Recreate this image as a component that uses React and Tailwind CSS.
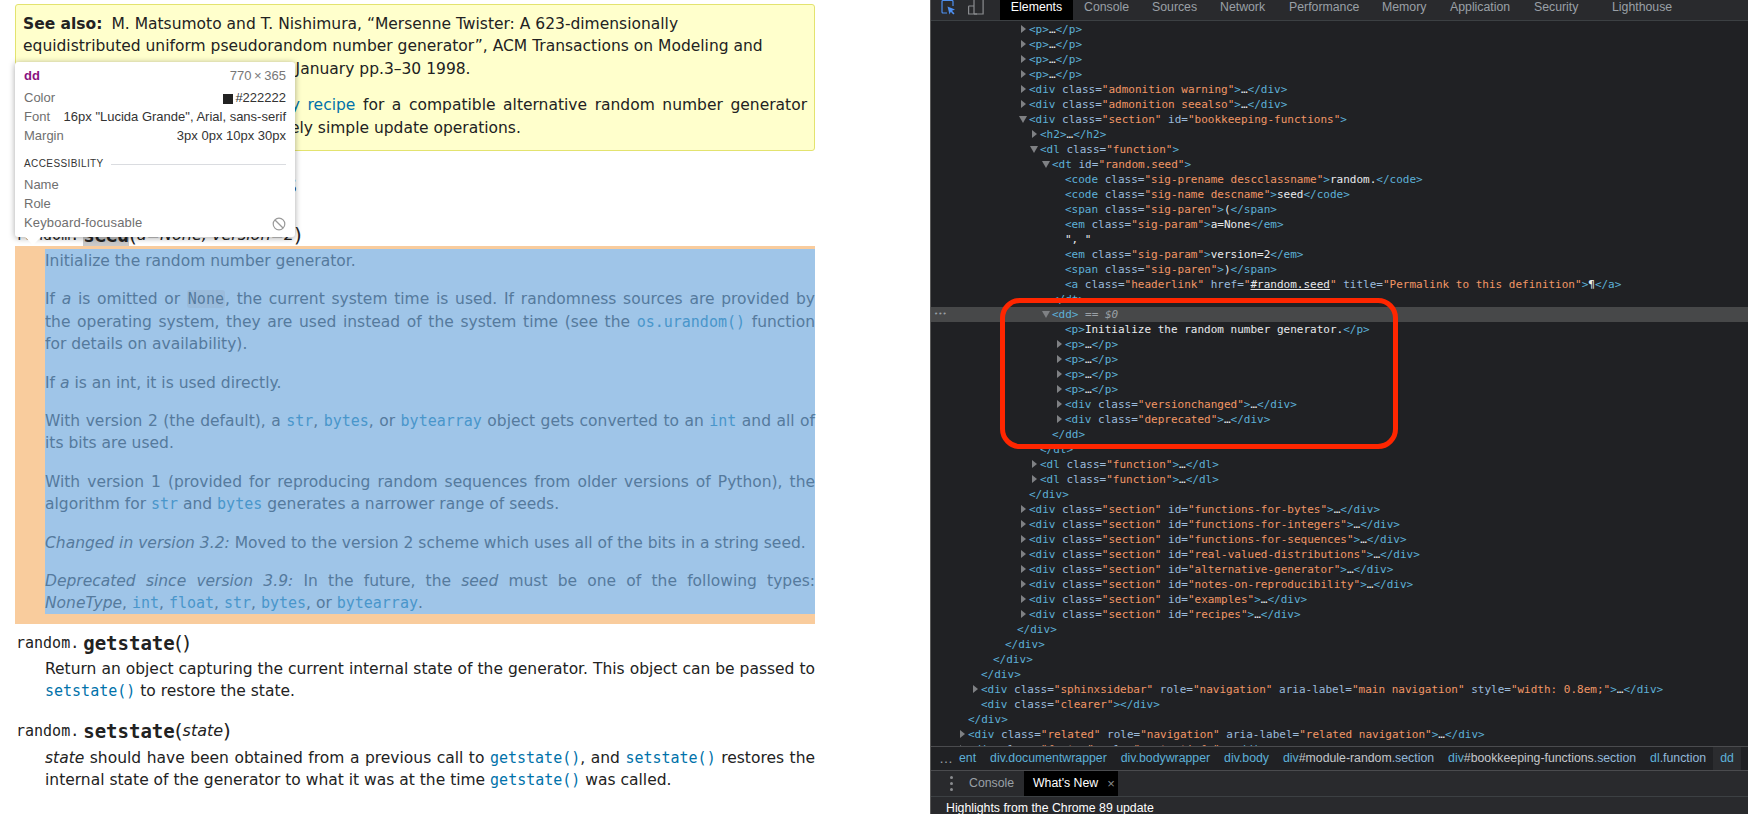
import React from "react";

const MONO = "font-['DejaVu_Sans_Mono','Liberation_Mono',monospace]";
const BODY = "font-['DejaVu_Sans','Open_Sans',sans-serif]";
const UI = "font-['Liberation_Sans',Arial,sans-serif]";

const J = ({ children }) => <div className="[text-align-last:justify] whitespace-nowrap">{children}</div>;
const L = ({ children }) => <div className="whitespace-nowrap">{children}</div>;

const Code = ({ children, light }) => (
  <code className={`${MONO} text-[15px] leading-none ${light ? "text-[#4996cb]" : "text-[#0072aa]"}`}>{children}</code>
);
const Link = ({ children }) => <Code light>{children}</Code>;

function Sig({ name, params, seed }) {
  return (
    <div className="flex h-[30px] items-end whitespace-nowrap pl-px leading-[22px] text-[#222]">
      <span className={`${MONO} text-[15px]`}>random.</span>
      <span className={`${MONO} ml-[4px] text-[19px] font-bold ${seed ? "bg-[#c9c9c9]" : ""}`}>{name}</span>
      <span className="text-[20px]">(</span>
      {params && <em className="text-[16px]">{params}</em>}
      <span className="text-[20px]">)</span>
    </div>
  );
}

const INDENT = [
  "pl-[37px]", "pl-[50px]", "pl-[62px]", "pl-[74px]", "pl-[86px]",
  "pl-[98px]", "pl-[109px]", "pl-[121px]", "pl-[134px]",
];

function tokens(s) {
  const parts = s.match(/"[^"]*"|\s[\w-]+=|<[^>\s]*|>|…|[^<>"…]+/g) || [];
  return parts.map((p, i) => {
    if (p === '"#random.seed"')
      return <span key={i} className="text-[#f29766]">"<span className="text-[#e8eaed] underline">#random.seed</span>"</span>;
    if (p[0] === '"') return <span key={i} className="text-[#f29766]">{p}</span>;
    if (/^\s[\w-]+=$/.test(p)) return <span key={i} className="text-[#9bbbdc]">{p}</span>;
    if (p[0] === "<" || p === ">") return <span key={i} className="text-[#5db0d7]">{p}</span>;
    return <span key={i} className="text-[#e8eaed]">{p}</span>;
  });
}

function Tri({ open }) {
  return open ? (
    <span className="absolute -ml-[10px] mt-[4px] h-0 w-0 border-x-[4px] border-t-[7px] border-x-transparent border-t-[#7f8184]" />
  ) : (
    <span className="absolute -ml-[8px] mt-[3px] h-0 w-0 border-y-[4px] border-l-[5px] border-y-transparent border-l-[#7f8184]" />
  );
}

const rows = [
  [5, "c", "<p>…</p>"], [5, "c", "<p>…</p>"], [5, "c", "<p>…</p>"], [5, "c", "<p>…</p>"],
  [5, "c", '<div class="admonition warning">…</div>'],
  [5, "c", '<div class="admonition seealso">…</div>'],
  [5, "o", '<div class="section" id="bookkeeping-functions">'],
  [6, "c", "<h2>…</h2>"],
  [6, "o", '<dl class="function">'],
  [7, "o", '<dt id="random.seed">'],
  [8, "", '<code class="sig-prename descclassname">random.</code>'],
  [8, "", '<code class="sig-name descname">seed</code>'],
  [8, "", '<span class="sig-paren">(</span>'],
  [8, "", '<em class="sig-param">a=None</em>'],
  [8, "raw", '", "'],
  [8, "", '<em class="sig-param">version=2</em>'],
  [8, "", '<span class="sig-paren">)</span>'],
  [8, "", '<a class="headerlink" href="#random.seed" title="Permalink to this definition">¶</a>'],
  [7, "", "</dt>"],
  [7, "sel", ""],
  [8, "", "<p>Initialize the random number generator.</p>"],
  [8, "c", "<p>…</p>"], [8, "c", "<p>…</p>"], [8, "c", "<p>…</p>"], [8, "c", "<p>…</p>"],
  [8, "c", '<div class="versionchanged">…</div>'],
  [8, "c", '<div class="deprecated">…</div>'],
  [7, "", "</dd>"],
  [6, "", "</dl>"],
  [6, "c", '<dl class="function">…</dl>'],
  [6, "c", '<dl class="function">…</dl>'],
  [5, "", "</div>"],
  [5, "c", '<div class="section" id="functions-for-bytes">…</div>'],
  [5, "c", '<div class="section" id="functions-for-integers">…</div>'],
  [5, "c", '<div class="section" id="functions-for-sequences">…</div>'],
  [5, "c", '<div class="section" id="real-valued-distributions">…</div>'],
  [5, "c", '<div class="section" id="alternative-generator">…</div>'],
  [5, "c", '<div class="section" id="notes-on-reproducibility">…</div>'],
  [5, "c", '<div class="section" id="examples">…</div>'],
  [5, "c", '<div class="section" id="recipes">…</div>'],
  [4, "", "</div>"],
  [3, "", "</div>"],
  [2, "", "</div>"],
  [1, "", "</div>"],
  [1, "c", '<div class="sphinxsidebar" role="navigation" aria-label="main navigation" style="width: 0.8em;">…</div>'],
  [1, "", '<div class="clearer"></div>'],
  [0, "", "</div>"],
  [0, "c", '<div class="related" role="navigation" aria-label="related navigation">…</div>'],
  [0, "c", '<div class="footer" role="contentinfo">…</div>'],
];

function Row({ depth, kind, text }) {
  if (kind === "sel") {
    return (
      <div className={`relative h-[15px] bg-[#474849] ${INDENT[depth]}`}>
        <span className="absolute left-[3px] top-0 text-[7px] text-[#9aa0a6]">•••</span>
        <Tri open />
        <span className="text-[#5db0d7]">&lt;dd&gt;</span>
        <span className="text-[#9aa0a6]"> == <em>$0</em></span>
      </div>
    );
  }
  return (
    <div className={`h-[15px] ${INDENT[depth]}`}>
      {kind === "c" && <Tri />}
      {kind === "o" && <Tri open />}
      {kind === "raw" ? <span className="text-[#e8eaed]">{text}</span> : tokens(text)}
    </div>
  );
}

function Crumb({ a, b, c }) {
  return (
    <span className="whitespace-nowrap">
      <span className="text-[#5db0d7]">{a}</span>
      {b && <span className="text-[#c4c7ca]">{b}</span>}
      {c && <span className="text-[#93b8d9]">{c}</span>}
    </span>
  );
}

function Tooltip() {
  const Line = ({ k, v }) => (
    <div className="flex h-[19px] items-center justify-between">
      <span className="text-[#6f6f6f]">{k}</span>
      <span className="text-[#333]">{v}</span>
    </div>
  );
  return (
    <div className={`${UI} absolute left-[15px] top-[62px] h-[175px] w-[280px] rounded-[3px] bg-white px-[9px] pt-[4px] text-[13px] shadow-[0_1px_6px_rgba(0,0,0,0.35)]`}>
      <div className="flex h-[20px] items-center justify-between">
        <span className="font-bold text-[#881280]">dd</span>
        <span className="text-[#777]">770{"\u2009×\u2009"}365</span>
      </div>
      <div className="mt-[3px]">
        <Line k="Color" v={<span className="flex items-center gap-[2px]"><span className="h-[10px] w-[10px] bg-[#222]" />#222222</span>} />
        <Line k="Font" v={'16px "Lucida Grande", Arial, sans-serif'} />
        <Line k="Margin" v="3px 0px 10px 30px" />
      </div>
      <div className="mt-[9px] flex h-[18px] items-center gap-[7px]">
        <span className="text-[10px] font-medium tracking-[0.4px] text-[#333]">ACCESSIBILITY</span>
        <span className="h-px flex-1 bg-[#dadce0]" />
      </div>
      <div className="mt-[3px]">
        <Line k="Name" v="" />
        <Line k="Role" v="" />
        <div className="flex h-[19px] items-center justify-between">
          <span className="tracking-[0.15px] text-[#6f6f6f]">Keyboard-focusable</span>
          <svg width="14" height="14" viewBox="0 0 14 14" fill="none" stroke="#9a9a9a" strokeWidth="1.2">
            <circle cx="7" cy="7" r="5.8" />
            <path d="M3 3l8 8" />
          </svg>
        </div>
      </div>
      <span className="absolute left-[10px] top-full h-0 w-0 border-x-[8px] border-t-[8px] border-x-transparent border-t-white" />
    </div>
  );
}

export default function App() {
  return (
    <div className="flex h-[814px] w-[1748px] overflow-hidden bg-white">
      <div className={`${BODY} relative w-[930px] shrink-0 overflow-hidden pl-[15px] pr-[115px] pt-[4px] text-[15.5px] leading-[22.4px] text-[#222]`}>
        <div className="h-[147px] rounded-[3px] border border-[#e3e36f] bg-[#ffffcc] px-[7px] pt-[8px]">
          <L><b className="mr-[9px]">See also:</b>M. Matsumoto and T. Nishimura, “Mersenne Twister: A 623-dimensionally</L>
          <L>equidistributed uniform pseudorandom number generator”, ACM Transactions on Modeling and</L>
          <L>Computer Simulation Vol. 8, No. 1, January pp.3–30 1998.</L>
          <div className="mt-[14px]">
            <J><span className="text-[#0072aa]">Complementary-Multiply-with-Carry recipe</span> for a compatible alternative random number generator</J>
            <L>with a long period and comparatively simple update operations.</L>
          </div>
        </div>

        <h2 className="mt-[18px] h-[32px] whitespace-nowrap text-[24.8px] font-normal leading-[32px]">Bookkeeping functions</h2>
        <div className="mt-[15px]"><Sig name="seed" params="a=None, version=2" seed /></div>

        <div className="bg-[#f9cc9d] pb-[10px] pl-[30px] pt-[3px]">
          <div className="h-[365px] space-y-4 bg-[#9fc5e8] pt-px text-[#557a9d]">
            <div><L>Initialize the random number generator.</L></div>
            <div>
              <J>If <em>a</em> is omitted or <code className={`${MONO} rounded-[3px] bg-[#9bbcdc] px-[1px] text-[15px] leading-none`}>None</code>, the current system time is used. If randomness sources are provided by</J>
              <J>the operating system, they are used instead of the system time (see the <Link>os.urandom()</Link> function</J>
              <L>for details on availability).</L>
            </div>
            <div><L>If <em>a</em> is an int, it is used directly.</L></div>
            <div>
              <J>With version 2 (the default), a <Link>str</Link>, <Link>bytes</Link>, or <Link>bytearray</Link> object gets converted to an <Link>int</Link> and all of</J>
              <L>its bits are used.</L>
            </div>
            <div>
              <J>With version 1 (provided for reproducing random sequences from older versions of Python), the</J>
              <L>algorithm for <Link>str</Link> and <Link>bytes</Link> generates a narrower range of seeds.</L>
            </div>
            <div><L><em>Changed in version 3.2:</em> Moved to the version 2 scheme which uses all of the bits in a string seed.</L></div>
            <div>
              <J><em>Deprecated since version 3.9:</em> In the future, the <em>seed</em> must be one of the following types:</J>
              <L><em>NoneType</em>, <Link>int</Link>, <Link>float</Link>, <Link>str</Link>, <Link>bytes</Link>, or <Link>bytearray</Link>.</L>
            </div>
          </div>
        </div>

        <Sig name="getstate" />
        <div className="ml-[30px] mb-[9px] mt-[4px]">
          <J>Return an object capturing the current internal state of the generator. This object can be passed to</J>
          <L><Code>setstate()</Code> to restore the state.</L>
        </div>
        <Sig name="setstate" params="state" />
        <div className="ml-[30px] mt-[5px]">
          <J><em>state</em> should have been obtained from a previous call to <Code>getstate()</Code>, and <Code>setstate()</Code> restores the</J>
          <L>internal state of the generator to what it was at the time <Code>getstate()</Code> was called.</L>
        </div>

        <Tooltip />
      </div>

      <div className="flex min-w-0 flex-1 flex-col border-l border-[#5a5a5a] bg-[#202124]">
        <div className={`${UI} flex h-[21px] shrink-0 items-stretch border-b border-[#3c4043] bg-[#292a2d] text-[12.3px] leading-[14px] text-[#9aa0a6]`}>
          <div className="flex w-[69px] shrink-0 items-start gap-[12px] pl-[10px]">
            <svg width="15" height="15" viewBox="0 0 15 15" fill="none" className="shrink-0">
              <path d="M6 13H2a1 1 0 0 1-1-1V1.5a1 1 0 0 1 1-1h9a1 1 0 0 1 1 1V6" stroke="#4d8ff0" strokeWidth="1.2" />
              <path d="M6.5 6.5l7.5 3-3 1.2 2.5 2.8-1.2 1-2.5-2.8-1.3 2.8z" fill="#4d8ff0" />
            </svg>
            <svg width="16" height="15" viewBox="0 0 16 15" fill="none" stroke="#8a8c8f" strokeWidth="1.2" className="shrink-0">
              <path d="M5.5 6H1a.6.6 0 0 0-.4.5v7.5h14.5V-1H6v15" />
              <path d="M9 14H6" />
            </svg>
          </div>
          <div className="flex h-[20px] w-[73px] shrink-0 justify-center bg-black text-white">Elements</div>
          <div className="relative flex-1 whitespace-nowrap">
            <span className="absolute left-[11px] top-0">Console</span>
            <span className="absolute left-[79px] top-0">Sources</span>
            <span className="absolute left-[147px] top-0">Network</span>
            <span className="absolute left-[216px] top-0">Performance</span>
            <span className="absolute left-[309px] top-0">Memory</span>
            <span className="absolute left-[377px] top-0">Application</span>
            <span className="absolute left-[461px] top-0">Security</span>
            <span className="absolute left-[539px] top-0">Lighthouse</span>
          </div>
        </div>

        <div className={`${MONO} relative flex-1 overflow-hidden pt-px text-[11px] leading-[15px]`}>
          {rows.map((r, i) => (
            <Row key={i} depth={r[0]} kind={r[1]} text={r[2]} />
          ))}
          <div className="absolute left-[69px] top-[277px] h-[151px] w-[398px] rounded-[20px] border-[5px] border-[#ff2600]" />
        </div>

        <div className={`${UI} flex h-[25px] shrink-0 items-center gap-[14px] overflow-hidden border-y border-[#4a4b4e] text-[12.3px]`}>
          <span className="ml-[8px] mr-[-10px] w-[16px] text-[14px] text-[#9aa0a6]">…</span>
          <Crumb a="ent" />
          <Crumb a="div.documentwrapper" />
          <Crumb a="div.bodywrapper" />
          <Crumb a="div.body" />
          <Crumb a="div" b="#module-random" c=".section" />
          <Crumb a="div" b="#bookkeeping-functions" c=".section" />
          <Crumb a="dl" c=".function" />
          <span className="-ml-[7px] flex h-full items-center bg-[#2b2c2f] px-[7px]"><Crumb a="dd" /></span>
        </div>

        <div className={`${UI} flex h-[26px] shrink-0 items-stretch border-b border-[#3c4043] bg-[#292a2d] text-[12.3px]`}>
          <div className="flex w-[38px] shrink-0 flex-col items-center justify-center gap-[3px] pl-[2px]">
            <span className="h-[3px] w-[3px] rounded-full bg-[#8a8c8f]" />
            <span className="h-[3px] w-[3px] rounded-full bg-[#8a8c8f]" />
            <span className="h-[3px] w-[3px] rounded-full bg-[#8a8c8f]" />
          </div>
          <div className="flex w-[55px] shrink-0 items-center text-[#9aa0a6]">Console</div>
          <div className="flex w-[94px] shrink-0 items-center gap-[9px] bg-black pl-[9px] text-white">
            What's New
            <span className="text-[13px] leading-none text-[#8a8c8f]">×</span>
          </div>
        </div>

        <div className={`${UI} h-[17px] shrink-0 overflow-hidden bg-[#292a2d] pl-[15px] pt-[4px] text-[12.3px] leading-[15px] text-white`}>
          Highlights from the Chrome 89 update
        </div>
      </div>
    </div>
  );
}
